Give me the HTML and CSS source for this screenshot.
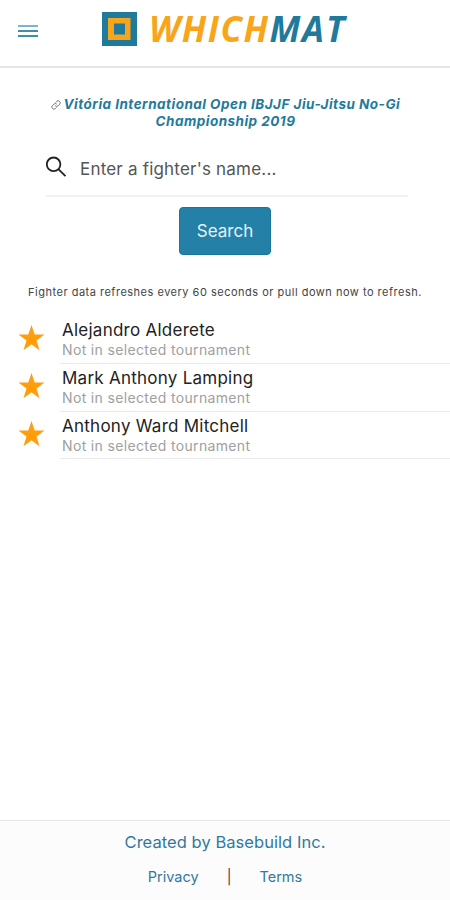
FILE: index.html
```html
<!DOCTYPE html>
<html lang="en">
<head>
    <meta charset="UTF-8">
    <meta name="viewport" content="width=device-width, initial-scale=1.0">
    <title>WhichMat</title>
    <link rel="stylesheet" href="styles.css">
</head>
<body>

    <header class="header">
        <div class="menu-button">
            <span></span>
            <span></span>
            <span></span>
        </div>
        <div class="logo">
            <svg class="logo-mark" viewBox="0 0 35 34">
                <rect width="35" height="34" fill="#1f7a9c"/>
                <rect x="6" y="6" width="22.5" height="22" fill="#f9a51a"/>
                <rect x="12" y="11.5" width="11" height="11" fill="#1f7a9c"/>
            </svg>
            <span class="logo-text">WHICH<b>MAT</b></span>
        </div>
    </header>

    <main class="content">
        <h2 class="tournament">
            <svg class="link-icon" viewBox="0 0 24 24">
                <path d="M10 14a5 5 0 0 0 7 0l4-4a5 5 0 0 0-7-7l-3 3M14 10a5 5 0 0 0-7 0l-4 4a5 5 0 0 0 7 7l3-3"/>
            </svg>
            <a>Vitória International Open IBJJF Jiu-Jitsu No-Gi<br>Championship 2019</a>
        </h2>

        <div class="search-box">
            <svg class="search-icon" viewBox="0 0 22 22">
                <circle cx="7.6" cy="8.3" r="6.8"/>
                <path d="M12.6 13.4L19.5 20.2"/>
            </svg>
            <span class="placeholder">Enter a fighter's name...</span>
        </div>

        <button class="search-button">Search</button>

        <p class="note">Fighter data refreshes every 60 seconds or pull down now to refresh.</p>

        <div class="fighters">
            <div class="fighter">
                <svg class="star" viewBox="0 0 26 26"><path d="M13 0l3.2 9.6H26l-8 6 3 9.6-8-5.9-8 5.9 3-9.6-8-6h9.8z"/></svg>
                <div class="fighter-info">
                    <h3>Alejandro Alderete</h3>
                    <p>Not in selected tournament</p>
                </div>
            </div>
            <div class="fighter">
                <svg class="star" viewBox="0 0 26 26"><path d="M13 0l3.2 9.6H26l-8 6 3 9.6-8-5.9-8 5.9 3-9.6-8-6h9.8z"/></svg>
                <div class="fighter-info">
                    <h3>Mark Anthony Lamping</h3>
                    <p>Not in selected tournament</p>
                </div>
            </div>
            <div class="fighter">
                <svg class="star" viewBox="0 0 26 26"><path d="M13 0l3.2 9.6H26l-8 6 3 9.6-8-5.9-8 5.9 3-9.6-8-6h9.8z"/></svg>
                <div class="fighter-info">
                    <h3>Anthony Ward Mitchell</h3>
                    <p>Not in selected tournament</p>
                </div>
            </div>
        </div>
    </main>

    <footer class="footer">
        <a class="credit">Created by Basebuild Inc.</a>
        <div class="footer-links">
            <a>Privacy</a>
            <span>|</span>
            <a>Terms</a>
        </div>
    </footer>

</body>
</html>
```
FILE: styles.css
```css
* {
    box-sizing: border-box;
}
body {
    margin: 0;
    height: 900px;
    display: flex;
    flex-direction: column;
    background: #fff;
    color: #222;
    font-family: Inter, "Liberation Sans", sans-serif;
}
h2, h3, p {
    margin: 0;
    font-weight: 400;
}
.header {
    height: 68px;
    display: flex;
    align-items: flex-start;
    border-bottom: 2px solid #e6e6e6;
}
.menu-button {
    width: 20px;
    margin: 25px 0 0 18px;
    display: flex;
    flex-direction: column;
    gap: 3px;
}
.menu-button span {
    height: 2px;
    background: #3d8dac;
}
.menu-button span:first-child {
    background: #82b2c6;
}
.logo {
    display: flex;
    margin: 12px 0 0 64px;
}
.logo-mark {
    width: 35px;
    height: 34px;
}
.logo-text {
    margin: -1px 0 0 12px;
    font-family: "Open Sans", sans-serif;
    font-size: 35px;
    line-height: 35px;
    font-weight: 700;
    font-style: italic;
    letter-spacing: 1.5px;
    color: #f9a51a;
}
.logo-text b {
    font-weight: 700;
    letter-spacing: 1.9px;
    color: #1f7a9c;
}
.content {
    flex: 1;
    display: flex;
    flex-direction: column;
    align-items: center;
}
.tournament {
    margin: 28px 0 0 1px;
    text-align: center;
    font-size: 13.5px;
    line-height: 17px;
    font-weight: 700;
    font-style: italic;
    letter-spacing: 0.48px;
    color: #1f7a9c;
    white-space: nowrap;
}
.link-icon {
    width: 10px;
    height: 10px;
    margin-right: -1px;
    fill: none;
    stroke: #777;
    stroke-width: 2.4;
    vertical-align: -1px;
}
.search-box {
    width: 362px;
    height: 67px;
    margin-left: 4px;
    display: flex;
    align-items: flex-start;
    border-bottom: 2px solid #f1f1f1;
}
.search-icon {
    width: 22px;
    height: 22px;
    margin-top: 26px;
    fill: none;
    stroke: #222;
    stroke-width: 1.8;
}
.placeholder {
    margin: 28px 0 0 12px;
    font-size: 17px;
    line-height: 22px;
    letter-spacing: 0.2px;
    color: #555;
}
.search-button {
    width: 92px;
    height: 48px;
    margin-top: 10px;
    padding: 0;
    border: 1px solid #1b7599;
    border-radius: 4px;
    background: #2480a7;
    color: #e6f3f8;
    font-family: inherit;
    font-size: 17px;
}
.note {
    margin-top: 29px;
    font-size: 11px;
    line-height: 16px;
    letter-spacing: 0.5px;
    color: #444;
    white-space: nowrap;
}
.fighters {
    width: 100%;
    margin-top: 16px;
}
.fighter {
    height: 47.8px;
    display: flex;
}
.star {
    width: 27px;
    height: 26px;
    margin: 9px 15px 0 18px;
    fill: #ff9d0a;
}
.fighter-info {
    flex: 1;
    padding: 4px 0 0 2px;
    border-bottom: 1px solid #e9e9e9;
}
.fighter-info h3 {
    font-size: 17px;
    line-height: 21px;
    letter-spacing: 0.25px;
}
.fighter-info p {
    font-size: 14px;
    line-height: 18px;
    letter-spacing: 0.35px;
    color: #a0a0a0;
}
.footer {
    height: 80px;
    display: flex;
    flex-direction: column;
    align-items: center;
    border-top: 1px solid #e5e5e5;
    background: #fcfcfc;
    color: #32799d;
}
.credit {
    margin-top: 10px;
    font-size: 16.5px;
    line-height: 22px;
    letter-spacing: 0.05px;
}
.footer-links {
    display: flex;
    gap: 28px;
    margin-top: 14px;
    font-size: 14.5px;
    line-height: 20px;
}
.footer-links span {
    color: #444;
}
```
